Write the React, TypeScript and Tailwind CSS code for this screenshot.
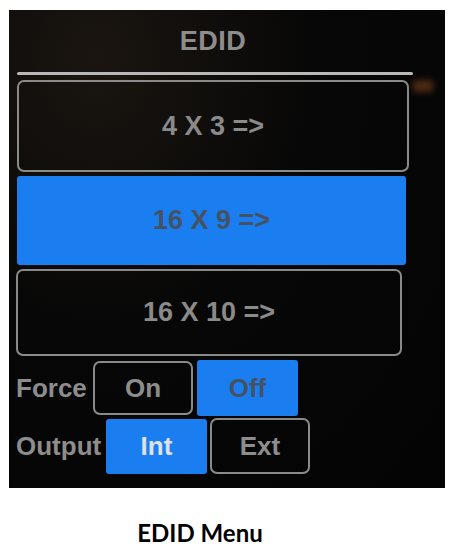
import React from "react";

const font = { fontFamily: '"Liberation Sans", Arial, sans-serif' };

export default function App() {
  return (
    <div className="w-[452px] h-[548px] bg-white flex flex-col overflow-hidden" style={font}>
      <div className="shrink-0 ml-[9px] mt-[10px] w-[436px] h-[478px] bg-[radial-gradient(ellipse_at_20%_10%,#1a1510_0%,#070707_45%,#040404_100%)] flex flex-col relative overflow-hidden">
        <div className="ml-[8px] w-[392px] h-[62px] flex items-center justify-center">
          <span className="text-[27px] font-bold text-[#8d8d8d] tracking-[0.5px]">EDID</span>
        </div>
        <div className="ml-[8px] w-[396px] h-[3px] bg-[#b8b8b8] rounded-full" />
        <div className="absolute left-[404px] top-[70px] w-[20px] h-[12px] bg-[#6b3a1a] blur-[3px] opacity-70" />
        <div className="ml-[8px] mt-[5px] w-[392px] h-[92px] rounded-[7px] border-2 border-[#8a8a8a] flex items-center justify-center">
          <span className="text-[27px] font-bold text-[#8a8a8a]">4 X 3 =&gt;</span>
        </div>
        <div className="ml-[8px] mt-[4px] w-[389px] h-[89px] rounded-[3px] bg-[#1a7ef0] flex items-center justify-center">
          <span className="text-[27px] font-bold text-[#455264]">16 X 9 =&gt;</span>
        </div>
        <div className="ml-[7px] mt-[4px] w-[386px] h-[87px] rounded-[7px] border-2 border-[#8a8a8a] flex items-center justify-center">
          <span className="text-[27px] font-bold text-[#8a8a8a]">16 X 10 =&gt;</span>
        </div>
        <div className="ml-[7px] mt-[4px] h-[56px] flex items-center">
          <span className="text-[26px] font-bold text-[#8d8d8d] w-[77px]">Force</span>
          <div className="w-[100px] h-[54px] rounded-[7px] border-2 border-[#8a8a8a] flex items-center justify-center">
            <span className="text-[26px] font-bold text-[#8d8d8d]">On</span>
          </div>
          <div className="ml-[4px] w-[101px] h-[56px] rounded-[3px] bg-[#1a7ef0] flex items-center justify-center">
            <span className="text-[26px] font-bold text-[#455264]">Off</span>
          </div>
        </div>
        <div className="ml-[7px] mt-[2px] h-[56px] flex items-center">
          <span className="text-[26px] font-bold text-[#8d8d8d] w-[90px]">Output</span>
          <div className="w-[101px] h-[55px] rounded-[3px] bg-[#1a7ef0] flex items-center justify-center">
            <span className="text-[26px] font-bold text-[#dce2e6]">Int</span>
          </div>
          <div className="ml-[3px] w-[100px] h-[56px] rounded-[7px] border-2 border-[#8a8a8a] flex items-center justify-center">
            <span className="text-[26px] font-bold text-[#8d8d8d]">Ext</span>
          </div>
        </div>
      </div>
      <div className="shrink-0 h-[60px] pt-[30px] flex items-center justify-center pr-[52px]">
        <span className="text-[24px] font-bold text-black leading-none" style={{ fontFamily: 'Lato, "Open Sans", sans-serif' }}>EDID Menu</span>
      </div>
    </div>
  );
}
